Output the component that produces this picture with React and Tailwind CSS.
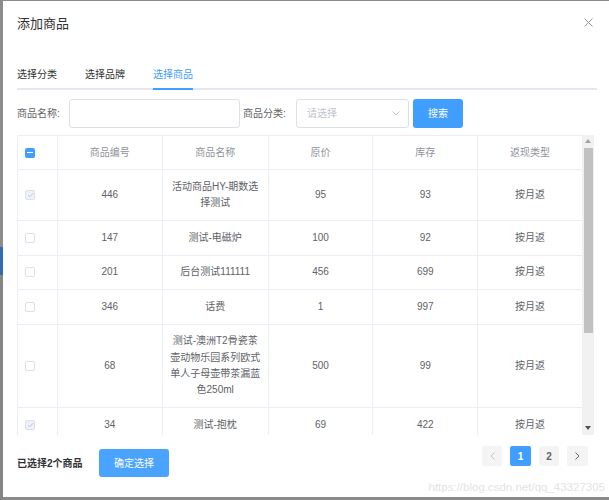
import React from "react";

const rows = [
  { id: "446", name: ["活动商品HY-期数选", "择测试"], price: "95", stock: "93", checked: true },
  { id: "147", name: ["测试-电磁炉"], price: "100", stock: "92" },
  { id: "201", name: ["后台测试111111"], price: "456", stock: "699" },
  { id: "346", name: ["话费"], price: "1", stock: "997" },
  {
    id: "68",
    name: ["测试-澳洲T2骨瓷茶", "壶动物乐园系列欧式", "单人子母壶带茶漏蓝", "色250ml"],
    price: "500",
    stock: "99",
  },
  { id: "34", name: ["测试-抱枕"], price: "69", stock: "422", checked: true },
];

// disabled checked / empty checkbox
function Box({ checked }) {
  if (checked) {
    return (
      <div className="w-[10px] h-[10px] rounded-[2px] border border-[#dcdfe6] bg-[#edf2fc] flex items-center justify-center">
        <svg width="7" height="6" viewBox="0 0 7 6">
          <path d="M1 3l1.8 1.8L6 1.2" fill="none" stroke="#c0c4cc" strokeWidth="1" />
        </svg>
      </div>
    );
  }
  return <div className="w-[10px] h-[10px] rounded-[2px] border border-[#dcdfe6] bg-white" />;
}

function Cell({ w, children, last }) {
  return (
    <div
      className={
        "flex items-center justify-center text-center py-[8.6px] leading-[16.3px] " +
        (last ? "" : "border-r border-[#ebeef5] ") +
        w
      }
    >
      {children}
    </div>
  );
}

export default function App() {
  return (
    <div className="w-[609px] h-[500px] bg-[#8a8a8a] flex font-['Liberation_Sans','Noto_Sans_CJK_SC',sans-serif] overflow-hidden">
      {/* overlay strip on the left */}
      <div className="w-[3px] flex flex-col">
        <div className="h-[247px] bg-[#8c8c8c]" />
        <div className="h-[28px] bg-[#2f6db3]" />
        <div className="flex-1 bg-[#858585]" />
      </div>

      <div className="relative flex-1 mt-[1px] h-[496px] bg-white flex flex-col pl-[14px] pr-[12px]">
        {/* header */}
        <div className="flex items-center justify-between pt-[13px]">
          <div className="text-[13px] leading-[20px] text-[#303133]">添加商品</div>
          <svg width="9" height="9" viewBox="0 0 9 9" className="mr-[4px] mt-[-3px]">
            <path d="M0.5 0.5l8 8M8.5 0.5l-8 8" stroke="#909399" strokeWidth="1" />
          </svg>
        </div>

        {/* tabs */}
        <div className="mt-[28px] relative flex gap-[28px] border-b-2 border-[#e4e7ed] text-[10px] leading-[26px]">
          <div className="w-[40px] text-[#303133]">选择分类</div>
          <div className="w-[40px] text-[#303133]">选择品牌</div>
          <div className="w-[40px] text-[#409eff] relative">
            选择商品
            <div className="absolute left-0 right-0 bottom-[-2px] h-[2px] bg-[#409eff]" />
          </div>
        </div>

        {/* search */}
        <div className="mt-[9px] flex items-center text-[10px] text-[#606266]">
          <div className="w-[52px]">商品名称:</div>
          <div className="w-[171px] h-[29px] border border-[#dcdfe6] rounded-[3px]" />
          <div className="ml-[3px] w-[53px]">商品分类:</div>
          <div className="w-[113px] h-[29px] border border-[#dcdfe6] rounded-[3px] flex items-center justify-between pl-[10px] pr-[8px] text-[#c0c4cc]">
            <span>请选择</span>
            <svg width="8" height="5" viewBox="0 0 8 5">
              <path d="M0.5 0.5L4 4l3.5-3.5" fill="none" stroke="#c0c4cc" strokeWidth="1" />
            </svg>
          </div>
          <div className="ml-[4px] w-[50px] h-[29px] rounded-[3px] bg-[#409eff] text-white flex items-center justify-center">
            搜索
          </div>
        </div>

        {/* table */}
        <div className="mt-[7px] h-[300px] flex overflow-hidden">
          <div className="w-[565px] border-l border-t border-[#ebeef5] text-[10px]">
            <div className="flex border-b border-[#ebeef5] text-[#909399]">
              <div className="w-[40px] border-r border-[#ebeef5] flex items-center pl-[7px]">
                <div className="w-[10px] h-[10px] rounded-[2px] bg-[#409eff] flex items-center justify-center">
                  <div className="w-[6px] h-[1px] bg-white" />
                </div>
              </div>
              <Cell w="w-[105px]">商品编号</Cell>
              <Cell w="w-[106px]">商品名称</Cell>
              <Cell w="w-[105px]">原价</Cell>
              <Cell w="w-[105px]">库存</Cell>
              <Cell w="w-[104px]" last>返现类型</Cell>
            </div>
            {rows.map((r) => (
              <div key={r.id} className="flex border-b border-[#ebeef5] text-[#606266]">
                <div className="w-[40px] border-r border-[#ebeef5] flex items-center pl-[7px]">
                  <Box checked={r.checked} />
                </div>
                <Cell w="w-[105px]">{r.id}</Cell>
                <Cell w="w-[106px]">
                  <div>
                    {r.name.map((l) => (
                      <div key={l}>{l}</div>
                    ))}
                  </div>
                </Cell>
                <Cell w="w-[105px]">{r.price}</Cell>
                <Cell w="w-[105px]">{r.stock}</Cell>
                <Cell w="w-[104px]" last>按月返</Cell>
              </div>
            ))}
          </div>
          {/* scrollbar */}
          <div className="w-[12px] bg-[#f1f1f1] flex flex-col items-center">
            <svg width="6" height="4" viewBox="0 0 6 4" className="mt-[4px]">
              <path d="M0 4L3 0l3 4z" fill="#a3a3a3" />
            </svg>
            <div className="mt-[5px] w-[9px] h-[185px] bg-[#c1c1c1]" />
            <div className="flex-1" />
            <svg width="6" height="4" viewBox="0 0 6 4" className="mb-[5px]">
              <path d="M0 0l3 4 3-4z" fill="#505050" />
            </svg>
          </div>
        </div>

        {/* footer */}
        <div className="mt-[11px] flex items-start justify-between">
          <div className="mt-[3px] flex items-center">
            <div className="text-[10px] font-semibold text-[#303133] w-[82px]">已选择2个商品</div>
            <div className="w-[70px] h-[28px] rounded-[3px] bg-[#4aa3ff] text-white text-[10px] flex items-center justify-center">
              确定选择
            </div>
          </div>
          <div className="flex gap-[8px] mr-[9px] text-[10px] font-bold">
            <div className="w-[20px] h-[20px] rounded-[2px] bg-[#f4f4f5] flex items-center justify-center">
              <svg width="5" height="8" viewBox="0 0 5 8">
                <path d="M4.5 0.5L1 4l3.5 3.5" fill="none" stroke="#c0c4cc" strokeWidth="1" />
              </svg>
            </div>
            <div className="w-[21px] h-[20px] rounded-[2px] bg-[#409eff] text-white flex items-center justify-center">1</div>
            <div className="w-[20px] h-[20px] rounded-[2px] bg-[#f4f4f5] text-[#606266] flex items-center justify-center">2</div>
            <div className="w-[21px] h-[20px] rounded-[2px] bg-[#f4f4f5] flex items-center justify-center">
              <svg width="5" height="8" viewBox="0 0 5 8">
                <path d="M0.5 0.5L4 4L0.5 7.5" fill="none" stroke="#606266" strokeWidth="1" />
              </svg>
            </div>
          </div>
        </div>

        {/* watermark */}
        <div className="absolute right-[4px] bottom-[2px] text-[11.5px] text-[#e3e3e3] leading-[16px]">
          https://blog.csdn.net/qq_43327305
        </div>
      </div>
    </div>
  );
}
